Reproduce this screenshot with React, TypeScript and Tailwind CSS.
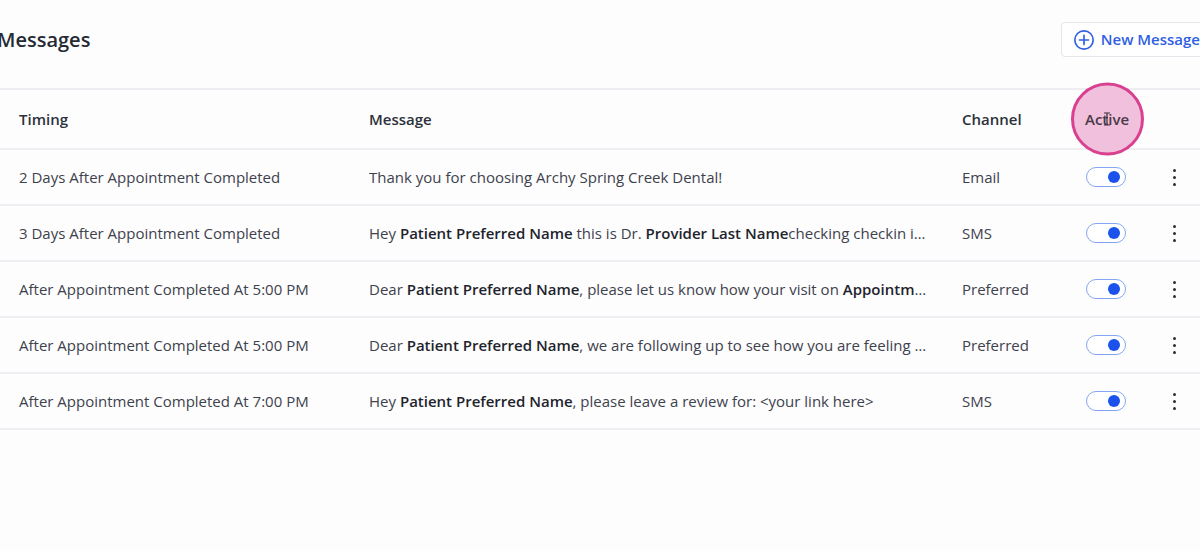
import React from "react";

type Part = { text: string; bold?: boolean };

const rows: { timing: string; message: Part[]; channel: string }[] = [
  {
    timing: "2 Days After Appointment Completed",
    message: [{ text: "Thank you for choosing Archy Spring Creek Dental!" }],
    channel: "Email",
  },
  {
    timing: "3 Days After Appointment Completed",
    message: [
      { text: "Hey " },
      { text: "Patient Preferred Name", bold: true },
      { text: " this is Dr. " },
      { text: "Provider Last Name", bold: true },
      { text: "checking checkin in with you after your visit today." },
    ],
    channel: "SMS",
  },
  {
    timing: "After Appointment Completed At 5:00 PM",
    message: [
      { text: "Dear " },
      { text: "Patient Preferred Name", bold: true },
      { text: ", please let us know how your visit on " },
      { text: "Appointment Date", bold: true },
      { text: " went." },
    ],
    channel: "Preferred",
  },
  {
    timing: "After Appointment Completed At 5:00 PM",
    message: [
      { text: "Dear " },
      { text: "Patient Preferred Name", bold: true },
      { text: ", we are following up to see how you are feeling after your visit." },
    ],
    channel: "Preferred",
  },
  {
    timing: "After Appointment Completed At 7:00 PM",
    message: [
      { text: "Hey " },
      { text: "Patient Preferred Name", bold: true },
      { text: ", please leave a review for: <your link here>" },
    ],
    channel: "SMS",
  },
];

const Toggle = () => (
  <div className="w-10 h-5 rounded-full border-[1.5px] border-[#84a6f2] bg-white flex items-center justify-end pr-[5px]">
    <div className="w-3 h-3 rounded-full bg-[#1b52ec]" />
  </div>
);

const Kebab = () => (
  <div className="w-[3px] flex flex-col items-start gap-[4px]">
    <span className="w-[3px] h-[3px] rounded-full bg-[#2b2f36]" />
    <span className="w-[3px] h-[3px] rounded-full bg-[#2b2f36]" />
    <span className="w-[3px] h-[3px] rounded-full bg-[#2b2f36]" />
  </div>
);

const App = () => {
  return (
    <div
      className="w-[1200px] h-[551px] overflow-hidden bg-[#fdfdfe] text-[#3d424c]"
      style={{ fontFamily: '"Open Sans", "Liberation Sans", sans-serif' }}
    >
      <header className="h-[88px] flex items-center justify-between -ml-[3px] -mr-[23px]">
        <h1 className="text-[20px] font-semibold text-[#252a33] -mt-[8px]">Messages</h1>
        <button className="h-[35px] -mt-[9px] flex items-center gap-[6px] pl-[11px] pr-[22px] border border-[#e3e6eb] rounded-[4px] bg-white text-[#2f5fe3] text-[15px] font-semibold">
          <svg width="22" height="22" viewBox="0 0 24 24" fill="none" stroke="currentColor" strokeWidth="1.8" strokeLinecap="round">
            <circle cx="12" cy="12" r="10" />
            <path d="M12 7v10M7 12h10" />
          </svg>
          New Message
        </button>
      </header>

      <section className="border-t-2 border-[#eceef2]">
        <div className="grid grid-cols-[350px_593px_123px_88px_1fr] items-center h-[60px] pl-[19px] border-b-2 border-[#eceef2] text-[15px] font-semibold text-[#2c313a]">
          <div>Timing</div>
          <div>Message</div>
          <div>Channel</div>
          <div className="relative">
            <div className="absolute -left-[14px] top-1/2 -translate-y-1/2 w-[73px] h-[73px] rounded-full bg-[#f0c0dc] border-[3px] border-[#d9408f]" />
            <span className="relative text-[#4a3a48]">Active</span>
            <svg className="absolute left-[18px] top-[4px]" width="8" height="14" viewBox="0 0 8 14" fill="none" stroke="#3a2e3a" strokeWidth="1.2">
              <path d="M1 1h6M4 1v12M1 13h6" />
            </svg>
          </div>
          <div />
        </div>

        {rows.map((row, i) => (
          <div
            key={i}
            className="grid grid-cols-[350px_593px_123px_88px_1fr] items-center h-[56px] pl-[19px] border-b-2 border-[#eceef2] text-[15px]"
          >
            <div>{row.timing}</div>
            <div className="truncate pr-[32px]">
              {row.message.map((p, j) =>
                p.bold ? (
                  <span key={j} className="font-semibold text-[#1f242c]">
                    {p.text}
                  </span>
                ) : (
                  <span key={j}>{p.text}</span>
                )
              )}
            </div>
            <div>{row.channel}</div>
            <div className="pl-px">
              <Toggle />
            </div>
            <div>
              <Kebab />
            </div>
          </div>
        ))}
      </section>
    </div>
  );
};

export default App;
